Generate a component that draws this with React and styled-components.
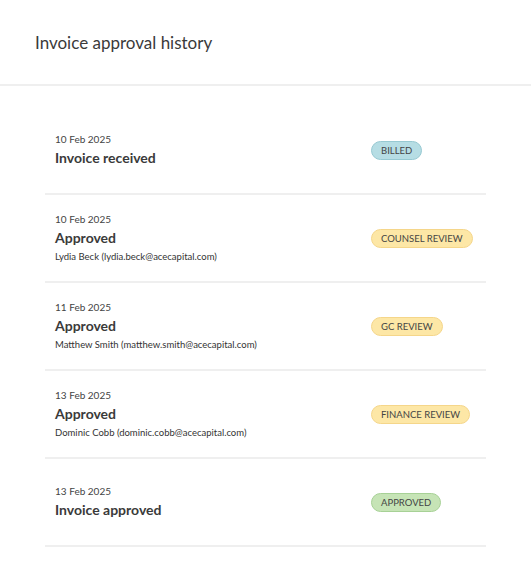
import React from "react";
import styled, { createGlobalStyle } from "styled-components";

const Global = createGlobalStyle`
  body { margin: 0; background: #fff; font-family: Lato, "Open Sans", sans-serif; color: #333; }
`;
const Header = styled.div`
  height: 86px; border-bottom: 2px solid #efefef; display: flex; align-items: center;
  padding: 0 35px; box-sizing: border-box;
`;
const Title = styled.h1`margin: 0; font-size: 17px; font-weight: 400; color: #3a3a3a;`;
const List = styled.div`margin: 21px 45px 0;`;
const Row = styled.div`
  height: 86px; border-bottom: 2px solid #efefef; display: grid;
  grid-template-columns: 1fr 115px; align-items: center; padding-left: 10px;
`;
const Info = styled.div`display: flex; flex-direction: column;`;
const DateT = styled.div`font-size: 10px; color: #444; line-height: 16px;`;
const Event = styled.div`font-size: 14px; font-weight: 700; color: #3a3a3a; line-height: 22px;`;
const Who = styled.div`font-size: 9.5px; color: #333; line-height: 16px;`;
const colors = {
  blue: ["#b6dde4", "#97c9d2"],
  yellow: ["#fde7a6", "#f5d68a"],
  green: ["#c6e4b6", "#a7d196"],
};
const Badge = styled.span`
  justify-self: start; height: 19px; padding: 0 9px; border-radius: 10px; font-size: 9.5px;
  display: inline-flex; align-items: center; color: #444; box-sizing: border-box;
  background: ${p => colors[p.$c][0]}; border: 1px solid ${p => colors[p.$c][1]};
`;
const rows = [
  ["10 Feb 2025", "Invoice received", null, "BILLED", "blue"],
  ["10 Feb 2025", "Approved", "Lydia Beck (lydia.beck@acecapital.com)", "COUNSEL REVIEW", "yellow"],
  ["11 Feb 2025", "Approved", "Matthew Smith (matthew.smith@acecapital.com)", "GC REVIEW", "yellow"],
  ["13 Feb 2025", "Approved", "Dominic Cobb (dominic.cobb@acecapital.com)", "FINANCE REVIEW", "yellow"],
  ["13 Feb 2025", "Invoice approved", null, "APPROVED", "green"],
];
export default function App() {
  return (
    <>
      <Global />
      <Header><Title>Invoice approval history</Title></Header>
      <List>
        {rows.map(([d, e, w, b, c], i) => (
          <Row key={i}>
            <Info>
              <DateT>{d}</DateT>
              <Event>{e}</Event>
              {w && <Who>{w}</Who>}
            </Info>
            <Badge $c={c}>{b}</Badge>
          </Row>
        ))}
      </List>
    </>
  );
}
